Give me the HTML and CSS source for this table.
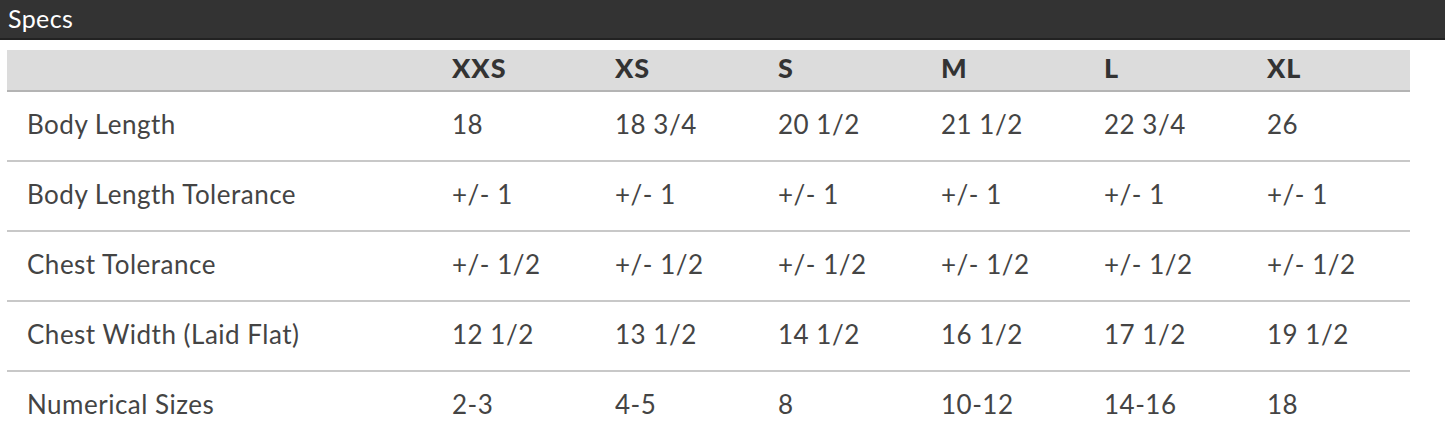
FILE: index.html
```html
<!DOCTYPE html>
<html>
<head>
<meta charset="utf-8">
<link rel="stylesheet" href="styles.css">
</head>
<body>
<div class="bar">Specs</div>
<table class="specs">
  <thead>
    <tr><th class="label"></th><th>XXS</th><th>XS</th><th>S</th><th>M</th><th>L</th><th>XL</th></tr>
  </thead>
  <tbody>
    <tr><td class="label">Body Length</td><td>18</td><td>18 3/4</td><td>20 1/2</td><td>21 1/2</td><td>22 3/4</td><td>26</td></tr>
    <tr><td class="label">Body Length Tolerance</td><td>+/- 1</td><td>+/- 1</td><td>+/- 1</td><td>+/- 1</td><td>+/- 1</td><td>+/- 1</td></tr>
    <tr><td class="label">Chest Tolerance</td><td>+/- 1/2</td><td>+/- 1/2</td><td>+/- 1/2</td><td>+/- 1/2</td><td>+/- 1/2</td><td>+/- 1/2</td></tr>
    <tr><td class="label">Chest Width (Laid Flat)</td><td>12 1/2</td><td>13 1/2</td><td>14 1/2</td><td>16 1/2</td><td>17 1/2</td><td>19 1/2</td></tr>
    <tr><td class="label">Numerical Sizes</td><td>2-3</td><td>4-5</td><td>8</td><td>10-12</td><td>14-16</td><td>18</td></tr>
  </tbody>
</table>
</body>
</html>
```
FILE: styles.css
```css
html, body {
  margin: 0;
  padding: 0;
  background: #fff;
  font-family: Lato, "Open Sans", sans-serif;
}
.bar {
  height: 38px;
  background: #333;
  border-bottom: 2px solid #222;
  color: #fff;
  font-size: 25px;
  letter-spacing: 0.4px;
  line-height: 36px;
  padding-left: 8px;
}
.specs {
  margin: 10px 0 0 7px;
  width: 1403px;
  border-collapse: collapse;
  table-layout: fixed;
}
.specs th, .specs td {
  text-align: left;
  padding: 0 0 0 20px;
  width: 143px;
}
.specs th.label, .specs td.label {
  width: 405px;
}
.specs thead th {
  background: #dcdcdc;
  height: 34px;
  padding-bottom: 6px;
  color: #333;
  font-weight: 900;
  font-size: 27px;
  letter-spacing: 1px;
  border-bottom: 2px solid #b4b4b4;
  vertical-align: middle;
}
.specs tbody td {
  height: 64px;
  padding-bottom: 4px;
  color: #444;
  font-size: 26px;
  letter-spacing: 0.5px;
  border-bottom: 2px solid #c8c8c8;
  vertical-align: middle;
}
.specs tbody tr:last-child td {
  border-bottom: none;
}
```
